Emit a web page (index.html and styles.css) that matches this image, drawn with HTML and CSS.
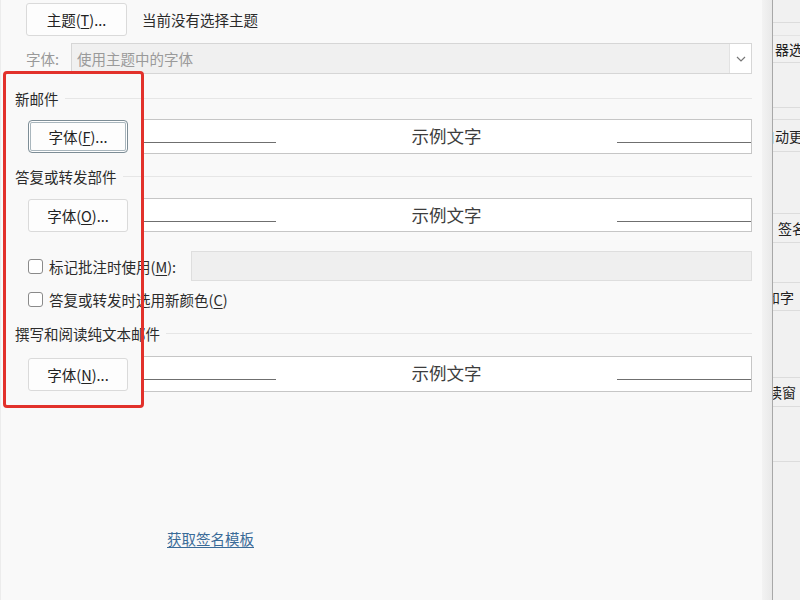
FILE: index.html
```html
<!DOCTYPE html>
<html lang="zh-CN">
<head>
    <meta charset="UTF-8">
    <meta name="viewport" content="width=device-width, initial-scale=1.0">
    <title>信纸和字体</title>
    <link rel="stylesheet" href="styles.css">
</head>
<body>
    <div class="page">
        <div class="main">
            <div class="row theme-row">
                <div class="btn theme-btn">主题(<u>T</u>)...</div>
                <div class="theme-text">当前没有选择主题</div>
            </div>
            <div class="row font-row">
                <div class="font-label">字体:</div>
                <div class="select">
                    <span class="select-text">使用主题中的字体</span>
                    <span class="select-arrow">
                        <svg width="10" height="6" viewBox="0 0 10 6"><path d="M1 1 L5 5 L9 1" fill="none" stroke="#777" stroke-width="1.2"/></svg>
                    </span>
                </div>
            </div>

            <div class="header h1"><span>新邮件</span><i class="sep"></i></div>
            <div class="row sample-row r1">
                <div class="btn font-btn focus">字体(<u>F</u>)...</div>
                <div class="sample">
                    <i class="seg"></i><span class="sample-text">示例文字</span><i class="seg"></i>
                </div>
            </div>

            <div class="header h2"><span>答复或转发部件</span><i class="sep"></i></div>
            <div class="row sample-row r2">
                <div class="btn font-btn">字体(<u>O</u>)...</div>
                <div class="sample">
                    <i class="seg"></i><span class="sample-text">示例文字</span><i class="seg"></i>
                </div>
            </div>

            <div class="row check-row c1">
                <span class="check"></span>
                <span class="check-label">标记批注时使用(<u>M</u>):</span>
                <div class="field"></div>
            </div>
            <div class="row check-row c2">
                <span class="check"></span>
                <span class="check-label">答复或转发时选用新颜色(<u>C</u>)</span>
            </div>

            <div class="header h3"><span>撰写和阅读纯文本邮件</span><i class="sep"></i></div>
            <div class="row sample-row r3">
                <div class="btn font-btn">字体(<u>N</u>)...</div>
                <div class="sample">
                    <i class="seg"></i><span class="sample-text">示例文字</span><i class="seg"></i>
                </div>
            </div>

            <a class="link" href="#">获取签名模板</a>

            <div class="highlight"></div>
        </div>
        <div class="gutter"></div>
        <div class="side">
            <div class="side-row s0"></div>
            <div class="side-row s1"><span class="cut" style="margin-left:2px">器选</span></div>
            <div class="side-row s2"></div>
            <div class="side-row s3"><span class="cut" style="margin-left:-12px">自动更</span></div>
            <div class="side-row s4"></div>
            <div class="side-row s5"><span class="side-btn">签名</span></div>
            <div class="side-row s6"></div>
            <div class="side-row s7"><span class="cut" style="margin-left:-7px">和字</span></div>
            <div class="side-row s8"></div>
            <div class="side-row s9"><span class="cut" style="margin-left:-5px">读窗</span></div>
            <div class="side-row s10"></div>
        </div>
    </div>
</body>
</html>
```

FILE: styles.css
```css
body{
    margin: 0;
    font-family: "Noto Sans CJK SC", "Noto Sans", sans-serif;
    font-size: 14.5px;
    color: #2b2b2b;
}
u{
    text-decoration: underline;
    text-underline-offset: 2px;
}
.page{
    display: flex;
    width: 800px;
    height: 600px;
    overflow: hidden;
}
.main{
    position: relative;
    width: 762px;
    box-sizing: border-box;
    padding: 3px 10px 0 14px;
    background-color: #f9f9f9;
    border-left: 1px solid #ececec;
}
.row{
    display: flex;
    align-items: center;
}
.btn{
    display: flex;
    align-items: center;
    justify-content: center;
    box-sizing: border-box;
    background-color: #fdfdfd;
    border: 1px solid #dadada;
    border-radius: 3px;
    color: #222;
    white-space: nowrap;
}
.theme-row{
    height: 33px;
    padding-left: 11px;
}
.theme-btn{
    width: 101px;
    height: 33px;
}
.theme-text{
    margin-left: 15px;
}
.font-row{
    margin-top: 7px;
    height: 31px;
    padding-left: 11px;
}
.font-label{
    width: 45px;
    color: #9a9a9a;
}
.select{
    flex: 1;
    height: 31px;
    box-sizing: border-box;
    display: flex;
    align-items: center;
    background-color: #f0f0f0;
    border: 1px solid #d6d6d6;
}
.select-text{
    flex: 1;
    padding-left: 5px;
    color: #9a9a9a;
}
.select-arrow{
    width: 21px;
    height: 29px;
    display: flex;
    align-items: center;
    justify-content: center;
    background-color: #fff;
    border-left: 1px solid #e2e2e2;
}
.header{
    display: flex;
    align-items: center;
    height: 20px;
    color: #2b2b2b;
}
.header .sep{
    flex: 1;
    height: 1px;
    margin-left: 6px;
    background-color: #e6e6e6;
}
.h1{ margin-top: 14px; }
.h2{ margin-top: 12px; }
.h3{ margin-top: 13px; }
.sample-row{
    padding-left: 13px;
}
.r1{ margin-top: 11px; height: 35px; }
.r2{ margin-top: 12px; height: 34px; }
.r3{ margin-top: 13px; height: 36px; }
.font-btn{
    width: 100px;
    height: 33px;
}
.font-btn.focus{
    border: 1px solid #7d8d96;
    box-shadow: inset 0 0 0 1px #fff, inset 0 0 0 2px #a9b6bd;
    border-radius: 4px;
}
.sample{
    margin-left: 14px;
    flex: 1;
    height: 100%;
    box-sizing: border-box;
    display: flex;
    background-color: #fff;
    border: 1px solid #c6c6c6;
    border-left: none;
}
.sample .seg{
    width: 134px;
    height: 1px;
    margin-top: 22px;
    background-color: #6f6f6f;
}
.sample-text{
    flex: 1;
    text-align: center;
    font-size: 17.5px;
    line-height: 31px;
    color: #3d3d3d;
}
.check-row{
    padding-left: 13px;
}
.c1{ margin-top: 19px; height: 30px; }
.c2{ margin-top: 7px; height: 22px; }
.check{
    width: 15px;
    height: 15px;
    box-sizing: border-box;
    border: 1px solid #8a8a8a;
    border-radius: 3px;
    background-color: #fff;
}
.check-label{
    margin-left: 6px;
    white-space: nowrap;
}
.field{
    margin-left: 15px;
    flex: 1;
    height: 30px;
    box-sizing: border-box;
    background-color: #efefef;
    border: 1px solid #dedede;
}
.link{
    display: inline-block;
    margin-top: 136px;
    margin-left: 152px;
    color: #3a6b98;
    text-decoration: underline;
    text-underline-offset: 2px;
}
.highlight{
    position: absolute;
    left: 2px;
    top: 71px;
    width: 141px;
    height: 337px;
    box-sizing: border-box;
    border: 3px solid #e2312b;
    border-radius: 4px;
}
.gutter{
    width: 10px;
    background: linear-gradient(to right, #f3f3f3, #e9e9e9);
    border-right: 1px solid #a8a8a8;
}
.side{
    flex: 1;
    background-color: #f1f1f1;
    display: flex;
    flex-direction: column;
    overflow: hidden;
}
.side-row{
    display: flex;
    align-items: center;
    flex-shrink: 0;
    border-bottom: 1px solid #dcdcdc;
    overflow: hidden;
    white-space: nowrap;
    color: #222;
}
.cut{
    font-size: 14px;
}
.s0{ height: 22px; }
.s1{ height: 26px; border-top: 1px solid #e3e3e3; margin-top: 12px; }
.s2{ height: 44px; }
.s3{ height: 31px; border-top: 1px solid #dcdcdc; margin-top: 11px; }
.s4{ height: 61px; }
.s5{ height: 28px; }
.s6{ height: 39px; }
.s7{ height: 27px; }
.s8{ height: 66px; }
.s9{ height: 28px; }
.s10{ height: 54px; }
.side-btn{
    margin-left: 5px;
    font-size: 14px;
}
```
